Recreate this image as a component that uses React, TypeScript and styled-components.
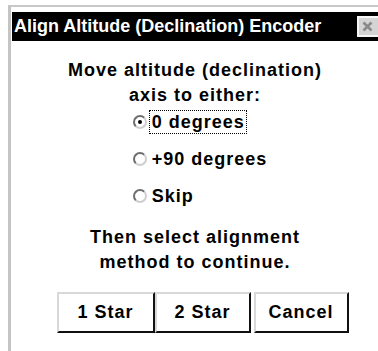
import React from "react";
import styled, { createGlobalStyle } from "styled-components";

const Global = createGlobalStyle`
  html, body { margin: 0; padding: 0; background: #ffffff; }
  body { width: 378px; height: 351px; overflow: hidden; font-family: "Liberation Sans", Arial, sans-serif; }
`;

const Frame = styled.div`
  margin: 5px 0 0 8px;
  height: 346px;
  border-left: 3px solid #c4c4c4;
  border-top: 2px solid #c8c8c8;
  padding: 5px 0 0 1px;
  box-sizing: border-box;
`;

const TitleBar = styled.div`
  height: 29px;
  background: #000000;
  display: flex;
  align-items: center;
  justify-content: space-between;
  padding-left: 2px;
`;

const Title = styled.span`
  color: #ffffff;
  font-weight: bold;
  font-size: 18px;
  white-space: nowrap;
`;

const CloseBox = styled.div`
  width: 25px;
  height: 21px;
  margin-right: -4px;
  box-sizing: border-box;
  background: #d4d4d4;
  border: 2px solid #f6f6f6;
  display: flex;
  align-items: center;
  justify-content: flex-start;
  padding-left: 2px;
`;

const Body = styled.div`
  display: flex;
  flex-direction: column;
  align-items: center;
  padding-top: 17px;
`;

const Message = styled.div`
  font-weight: bold;
  font-size: 18px;
  letter-spacing: 1px;
  line-height: 25px;
  text-align: center;
  color: #000;
`;

const Options = styled.div`
  display: flex;
  flex-direction: column;
  align-items: flex-start;
  gap: 14px;
  margin: 2px 0 18px 12px;
`;

const Option = styled.label`
  display: flex;
  align-items: center;
  font-weight: bold;
  font-size: 18px;
  letter-spacing: 1px;
  height: 23px;
  color: #000;
`;

const RadioCircle = styled.span<{ $checked?: boolean }>`
  width: 14px;
  height: 14px;
  margin-right: 2px;
  box-sizing: border-box;
  border-radius: 50%;
  border: 2px solid;
  border-color: #6e6e6e #cfcfcf #cfcfcf #6e6e6e;
  background: #fff;
  display: flex;
  align-items: center;
  justify-content: center;
  &::after {
    content: "";
    width: 4px;
    height: 4px;
    border-radius: 50%;
    background: #000;
    display: ${(p) => (p.$checked ? "block" : "none")};
  }
`;

const OptionText = styled.span<{ $focused?: boolean }>`
  padding: 0 1px 0 2px;
  line-height: 22px;
  border: 1px dotted ${(p) => (p.$focused ? "#000" : "transparent")};
`;

const Buttons = styled.div`
  display: flex;
  margin-top: 17px;
  margin-left: 15px;
`;

const Button = styled.button<{ $w: number; $gap?: number }>`
  width: ${(p) => p.$w}px;
  height: 41px;
  margin-left: ${(p) => p.$gap ?? 0}px;
  background: #ffffff;
  border: 2px solid;
  border-color: #d8d8d8 #101010 #101010 #d8d8d8;
  box-sizing: border-box;
  font-family: "Liberation Sans", Arial, sans-serif;
  font-weight: bold;
  font-size: 18px;
  letter-spacing: 1px;
  color: #000;
  padding: 0;
`;

export default function App() {
  return (
    <>
      <Global />
      <Frame>
        <TitleBar>
          <Title>Align Altitude (Declination) Encoder</Title>
          <CloseBox>
            <svg width="13" height="13" viewBox="0 0 13 13">
              <path d="M2.5 2.5 L10.5 10.5 M10.5 2.5 L2.5 10.5" stroke="#8a8a8a" strokeWidth="2.6" />
            </svg>
          </CloseBox>
        </TitleBar>
        <Body>
          <Message>
            Move altitude (declination)
            <br />
            axis to either:
          </Message>
          <Options>
            <Option>
              <RadioCircle $checked />
              <OptionText $focused>0 degrees</OptionText>
            </Option>
            <Option>
              <RadioCircle />
              <OptionText>+90 degrees</OptionText>
            </Option>
            <Option>
              <RadioCircle />
              <OptionText>Skip</OptionText>
            </Option>
          </Options>
          <Message>
            Then select alignment
            <br />
            method to continue.
          </Message>
          <Buttons>
            <Button $w={98}>1 Star</Button>
            <Button $w={96}>2 Star</Button>
            <Button $w={95} $gap={3}>Cancel</Button>
          </Buttons>
        </Body>
      </Frame>
    </>
  );
}
